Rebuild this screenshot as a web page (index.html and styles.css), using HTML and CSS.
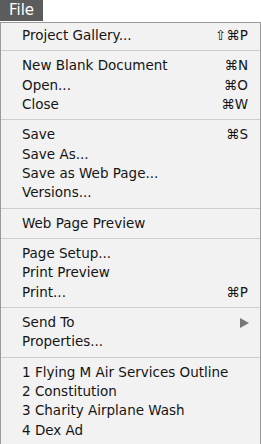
FILE: index.html
```html
<!DOCTYPE html>
<html lang="en">
<head>
<meta charset="UTF-8">
<title>File menu</title>
<link rel="stylesheet" href="styles.css">
</head>
<body>
  <div class="menubar"><span class="title">File</span></div>
  <div class="menu">
    <div class="group">
      <div class="item"><span>Project Gallery...</span><span class="key">&#8679;&#8984;P</span></div>
    </div>
    <div class="group">
      <div class="item"><span>New Blank Document</span><span class="key">&#8984;N</span></div>
      <div class="item"><span>Open...</span><span class="key">&#8984;O</span></div>
      <div class="item"><span>Close</span><span class="key">&#8984;W</span></div>
    </div>
    <div class="group">
      <div class="item"><span>Save</span><span class="key">&#8984;S</span></div>
      <div class="item"><span>Save As...</span></div>
      <div class="item"><span>Save as Web Page...</span></div>
      <div class="item"><span>Versions...</span></div>
    </div>
    <div class="group">
      <div class="item"><span>Web Page Preview</span></div>
    </div>
    <div class="group">
      <div class="item"><span>Page Setup...</span></div>
      <div class="item"><span>Print Preview</span></div>
      <div class="item"><span>Print...</span><span class="key">&#8984;P</span></div>
    </div>
    <div class="group">
      <div class="item"><span>Send To</span><span class="arrow"></span></div>
      <div class="item"><span>Properties...</span></div>
    </div>
    <div class="group">
      <div class="item"><span>1 Flying M Air Services Outline</span></div>
      <div class="item"><span>2 Constitution</span></div>
      <div class="item"><span>3 Charity Airplane Wash</span></div>
      <div class="item"><span>4 Dex Ad</span></div>
    </div>
  </div>
</body>
</html>
```

FILE: styles.css
```css
body {
  margin: 0;
  background: #ffffff;
  font-family: "DejaVu Sans", Verdana, sans-serif;
  font-size: 13.5px;
  color: #151515;
}
.menubar {
  height: 22px;
}
.title {
  display: inline-block;
  height: 21px;
  line-height: 21px;
  padding: 0 9px 0 9px;
  background: #5c5c5c;
  color: #fff;
  font-size: 15px;
}
.menu {
  width: 259px;
  height: 421px;
  border: 1px solid #9a9a9a;
  border-bottom: none;
  background: #f2f2f2;
}
.group {
  padding: 5px 0;
  border-bottom: 1px solid #cdcdcd;
}
.group:first-child {
  padding-top: 3px;
}
.group:last-child {
  border-bottom: none;
}
.item {
  display: flex;
  justify-content: space-between;
  align-items: center;
  height: 19.33px;
  line-height: 19.33px;
  padding: 0 12px 0 21px;
}
.arrow {
  flex: none;
  width: 0;
  height: 0;
  border-top: 5px solid transparent;
  border-bottom: 5px solid transparent;
  border-left: 9px solid #777;
  margin-right: -1px;
}
```
